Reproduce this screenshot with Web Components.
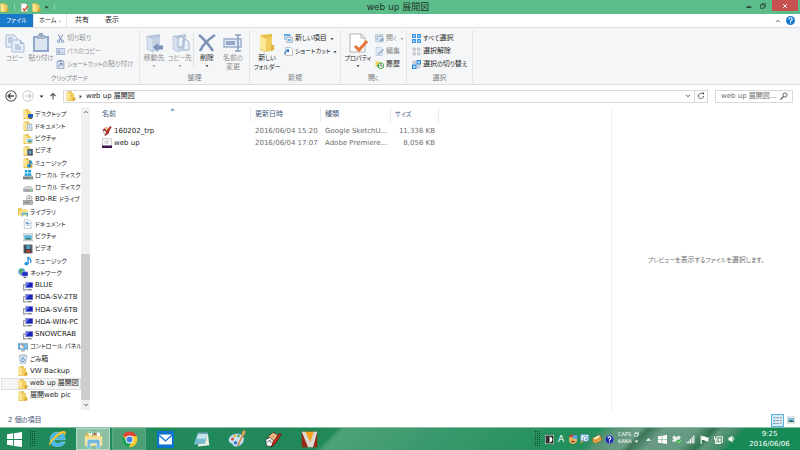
<!DOCTYPE html>
<html>
<head>
<meta charset="utf-8">
<title>web up 展開図</title>
<style>
html,body{height:100%;margin:0}
body{font:7px/9px "DejaVu Sans","Noto Sans CJK JP",sans-serif;font-feature-settings:"palt";color:#222;background:#fff;overflow:hidden}
</style>
</head>
<body>
<explorer-window></explorer-window>
<script>
const folder = '<path d="M1 1l8-1v16H1z" fill="#e3b93f"/><path d="M1 1l6 2v13l-6-2z" fill="#fbe594"/><path d="M8 3h5v8l-2 4-4 1V3z" fill="#f2cf5e"/><path d="M11 10h4v5l-5 1z" fill="#d9a92f"/>';
const docs = '<path d="M2 1h8l3 3v11H2z" fill="#fff" stroke="#a7b0ba"/>';
const pc = '<path d="M1 5v9h5M1 6h3" fill="none" stroke="#999" stroke-width="2"/><path d="M4 2h12v9H4z" fill="#1a22b8" stroke="#c6cbe0"/><path d="M5 3h5l-4 6H5z" fill="#5e75e8"/><path d="M7 13h7v2H7z" fill="#777"/>';
const bigFolderBlue = '<path d="M3 3l13-2v16l-8 2-5-3z" fill="#b7c6dc"/><path d="M3 3l6 3v13l-6-3z" fill="#d7e1ef" stroke="#a9bad3" stroke-width=".6"/><path d="M9 4h7v11l-4 3H9z" fill="#c5d2e4"/>';
const win = c => `<path d="M0 2.3l6.6-1v6.2H0zM7.5 1.2L16 0v7.5H7.5zM0 8.4h6.6v6.3L0 13.7zM7.5 8.4H16V16l-8.5-1.2z" fill="${c}"/>`;
const ICONS = {
  folder,
  desktop: folder+'<path d="M8 8h8v6H8z" fill="#1d5fc0"/><path d="M10 14h4v2h-4z" fill="#555"/>',
  fdoc: folder+'<path d="M7 5h7v10H7z" fill="#e9f2fb" stroke="#7d9ec4"/><path d="M9 8h3M9 11h3" stroke="#4b7db8"/>',
  fpic: folder+'<path d="M6 7h10v7H6z" fill="#8fcbe8" stroke="#fff"/><path d="M7 13l4-3 4 3z" fill="#3b8a53"/>',
  fvid: folder+'<path d="M7 5h9v10H7z" fill="#31506b"/><path d="M8 6v9M15 6v9" stroke="#ddd" stroke-dasharray="1 1"/><path d="M10 7h3v6h-3z" fill="#7fb1d2"/>',
  fmus: folder+'<path d="M11 4v8M11 4q4 2 3 6" stroke="#1682d4" stroke-width="2" fill="none"/><ellipse cx="9.500" cy="12.500" rx="3" ry="2.500" fill="#1682d4"/>',
  diskw: '<path d="M0 10l3-3h10l3 3v4H0z" fill="#b9bdc1"/><path d="M0 11h16v4H0z" fill="#7d8388"/><circle cx="13" cy="13" r="1" fill="#7f7"/><path d="M3 0h4v4H3zM8 0h5v4H8zM3 5h4v4H3zM8 5h5v4H8z" fill="#19a6e0"/>',
  disk: '<path d="M1 9l3-3h9l3 3v4H1z" fill="#d4d7da" stroke="#969ca0"/><path d="M1 10h15v4H1z" fill="#9aa0a5"/><circle cx="13" cy="12" r="1.200" fill="#5f5"/>',
  bd: '<circle cx="10" cy="5" r="4.500" fill="#eee" stroke="#888"/><circle cx="10" cy="5" r="1.500" fill="#888"/><path d="M0 9h15v6H0z" fill="#b8bcc0" stroke="#777"/><path d="M2 12h9" stroke="#555"/>',
  library: '<path d="M0 2h6l1 2h8v9H0z" fill="#e8c14c"/><path d="M2 5h13v9H2z" fill="#fae08a"/><path d="M6 9h10v6h-2v-3H8v3H6z" fill="#5ab0dc"/>',
  ldoc: docs+'<path d="M5 5h3v3H5zM6 10h5M9 7h3" stroke="#4a85be" fill="#88b6e0"/>',
  lpic: '<path d="M0 3h16v11H0z" fill="#f8fafb" stroke="#8e999f"/><path d="M2 5h12v7H2z" fill="#66b8dc"/><path d="M2 12l5-3 7 2v1z" fill="#2d7551"/>',
  lvid: '<path d="M1 1h14v14H1z" fill="#27333d"/><path d="M5 2h7v6H5z" fill="#4b9ac3"/><path d="M5 9h7v5H5z" fill="#a7443d"/><path d="M3 1v14M13.500 1v14" stroke="#ddd" stroke-dasharray="1.500 1.500"/>',
  lmus: '<path d="M8 1v11M8 2q6 3 4 9" stroke="#2089d8" stroke-width="2.200" fill="none"/><ellipse cx="5.500" cy="12.500" rx="3.500" ry="2.800" fill="#2a96e0"/>',
  net: '<circle cx="6" cy="6" r="5.500" fill="#4fa6e0"/><path d="M2 3l4-2 2 4-4 5z" fill="#54ad3c"/><path d="M6 6h10v7H6z" fill="#1a2fc0" stroke="#cbd"/><path d="M9 14h4v2H9z" fill="#667"/>',
  pc,
  panel: '<path d="M0 2h16v10H0z" fill="#5fa9dc" stroke="#9fb9cc"/><circle cx="6" cy="7" r="3" fill="#fff"/><path d="M6 7V4a3 3 0 0 1 3 3z" fill="#e2712d"/><path d="M11 5h3M11 8h3" stroke="#fff"/><path d="M5 13h6v2H5z" fill="#89a"/>',
  bin: '<path d="M2 3h12l-2 13H4z" fill="#dfe8ee" stroke="#9ab" /><path d="M2 3l3-2h7l2 2z" fill="#f4f7f9" stroke="#9ab"/><path d="M8 6l3 4-3 3-3-3z" fill="none" stroke="#3583d1" stroke-width="1.500"/>',
  qdoc: docs+'<path d="M5 10l3 3 6-8" stroke="#e04a1c" stroke-width="2.500" fill="none"/>',
  copy: '<g stroke="#a9bbd3" fill="#e8eef7"><path d="M1 2h8l3 3v9H1z"/><path d="M7 7h8l4 4v8H7z"/></g><path d="M3 5h5M3 7h4M3 9h3M10 12h4M10 14h6M10 16h6" stroke="#8fa9cb"/><path d="M15 7v4h4z" fill="#a5bad6"/>',
  paste: '<path d="M2 3h16v16H2z" fill="#8fa7ca"/><path d="M4 5h12v12H4z" fill="#dbe5f2"/><path d="M6 2h8v4H6z" fill="#a6b5ca"/><path d="M8 0h4v3H8z" fill="#97a8c1"/>',
  moveto: bigFolderBlue+'<path d="M9 14l5-4v2.500h5v4h-5V19z" fill="#7c96bb"/>',
  copyto: bigFolderBlue+'<path d="M8 4h4l2 2v8H8zM13 7h4l2 2v8h-6z" fill="#eaf0f8" stroke="#9db1ce"/>',
  del: '<path d="M2 2c5 4 10 10 14 16M18 2C12 6 6 11 3 18" stroke="#7d92b5" stroke-width="2.600" fill="none"/>',
  rename: '<path d="M1 6h17v8H1z" fill="#e3eaf4" stroke="#9aaecb" stroke-width="1.400"/><path d="M3 8h9v4H3z" fill="#91a8ca"/><path d="M12 2h6M15 2v16M12 18h6" stroke="#8ba0c0" stroke-width="1.600"/>',
  newfolder: '<path d="M3 2l12-1v16l-7 2-5-2z" fill="#e7bd45"/><path d="M3 2l6 4v13l-6-3z" fill="#fbe795"/><path d="M9 4h6v13l-6 2z" fill="#f0cd5d"/><path d="M14 12h3v5l-3 1z" fill="#e0b136"/>',
  props: '<path d="M2 1h11l4 4v14H2z" fill="#fff" stroke="#b0b4b8"/><path d="M13 1v4h4" fill="none" stroke="#b0b4b8"/><path d="M7 13l4 4 8-9" stroke="#e8743a" stroke-width="3" fill="none"/>',
  cut: '<path d="M4 1l6 10M12 1L6 11" stroke="#8297b5" stroke-width="1.800"/><circle cx="4.500" cy="13" r="2.200" fill="none" stroke="#6d8fc0" stroke-width="1.600"/><circle cx="11.500" cy="13" r="2.200" fill="none" stroke="#6d8fc0" stroke-width="1.600"/>',
  path: '<path d="M0 3h16v10H0z" fill="#dae4f1" stroke="#8ba0c0" stroke-width="1.500"/><path d="M3 6l2 5 2-5M9 10h1M12 10h1" fill="none" stroke="#6780a5" stroke-width="1.300"/>',
  shortcut: '<path d="M2 2h12v13H2z" fill="#dfe8f3" stroke="#8ba0c0" stroke-width="1.500"/><path d="M5 0h6v3H5z" fill="#8ba0c0"/><path d="M5 12q0-4 5-5M7 6h4v4" fill="none" stroke="#5d78a3" stroke-width="1.500"/>',
  newitem: '<path d="M0 1h11v8H0z" fill="#cfe7f8" stroke="#3f8fd0"/><path d="M0 1h11v2H0z" fill="#3f8fd0"/><path d="M5 6h10v9H5z" fill="#fff" stroke="#77838f"/><path d="M7 9h6v4H7z" fill="#6bb5e2"/>',
  newshort: '<path d="M3 1h9l3 3v11H3z" fill="#fff" stroke="#8c969f"/><path d="M1 13q0-5 6-6M4 5h4v4" fill="none" stroke="#1e77d0" stroke-width="2"/>',
  open: '<path d="M1 1h13v13H1z" fill="#dfe7f1" stroke="#9bb0cc"/><path d="M3 4h2M3 7h2M3 10h2M7 4h5" stroke="#6e8bb4" stroke-width="1.500"/><path d="M7 12l5-5h3v6h-5z" fill="#8ea7c8"/>',
  edit: '<path d="M2 1h8l3 3v11H2z" fill="#e6edf6" stroke="#a6b7cf"/><path d="M5 14l1-4 8-7 2 2-8 8z" fill="#9bb2d0"/>',
  history: '<path d="M1 2h5l1 2h6v7H1z" fill="#efd15e"/><circle cx="10.500" cy="10.500" r="5" fill="#e9f5e7" stroke="#2f9a42" stroke-width="1.500"/><path d="M10.500 7v4h3" stroke="#333" fill="none"/><path d="M3 9h5l-2 5z" fill="#2f9a42"/>',
  all: '<path d="M0 0h7v7H0zM9 0h7v7H9zM0 9h7v7H0zM9 9h7v7H9z" fill="#3b94e0"/><path d="M2 2h3v3H2zM11 2h3v3h-3zM2 11h3v3H2zM11 11h3v3h-3z" fill="#b9dcf7"/>',
  none: '<path d="M2 2h4v4H2zM10 2h4v4h-4zM2 10h4v4H2zM10 10h4v4h-4z" fill="#fff" stroke="#9da2a7" stroke-width="1.300"/>',
  invert: '<path d="M2 2h4v4H2zM10 10h4v4h-4z" fill="#fff" stroke="#9da2a7" stroke-width="1.300"/><path d="M9 1h6v6H9zM1 9h6v6H1z" fill="#c6e3fa" stroke="#2386dc" stroke-width="2"/>',
  min: '<path d="M1 9h13v4H1z" fill="#20392c"/>',
  restore: '<path d="M5 5V2h10v8h-3" fill="none" stroke="#20392c" stroke-width="2"/><path d="M1 5h10v9H1z" fill="none" stroke="#20392c" stroke-width="2"/>',
  kana: '<path d="M5 5V2h10v8h-3M1 5h10v9H1z" fill="none" stroke="#fff" stroke-width="2"/>',
  close: '<path d="M3 3l10 10M13 3L3 13" stroke="#fff" stroke-width="2.400"/>',
  up: '<path d="M3 11l5-5 5 5" fill="none" stroke="#555" stroke-width="2.500"/>',
  down: '<path d="M3 5l5 5 5-5" fill="none" stroke="#444" stroke-width="2.500"/>',
  help: '<circle cx="8" cy="8" r="8" fill="#1878d0"/><path d="M5 6q0-3 3-3t3 3q0 1-3 3v1M8 11.500v2" fill="none" stroke="#fff" stroke-width="2"/>',
  back: '<circle cx="8" cy="8" r="7" fill="#fff" stroke="#555" stroke-width="1.400"/><path d="M12 8H4M7.500 4.500L4 8l3.500 3.500" fill="none" stroke="#444" stroke-width="1.800"/>',
  fwd: '<circle cx="8" cy="8" r="7" fill="#fff" stroke="#c9c9c9" stroke-width="1.300"/><path d="M4 8h8M8.500 4.500L12 8l-3.500 3.500" fill="none" stroke="#c9c9c9" stroke-width="1.600"/>',
  caret: '<path d="M2 5h12l-6 7z" fill="currentColor"/>',
  right: '<path d="M5 2l7 6-7 6z" fill="#444"/>',
  uparrow: '<path d="M8 15V3M3 8l5-5 5 5" fill="none" stroke="#555" stroke-width="2.200"/>',
  refresh: '<path d="M13 8a5.200 5.200 0 1 1-2-4" fill="none" stroke="#555" stroke-width="1.800"/><path d="M9 1h5v5z" fill="#555"/>',
  search: '<circle cx="10" cy="6" r="4.200" fill="none" stroke="#555" stroke-width="1.800"/><path d="M7 9l-6 6" stroke="#555" stroke-width="2.200"/>',
  sketch: '<path d="M1 6l5-4 6 3-1 7-6 2z" fill="#b33425"/><path d="M1 7l5 1 3 5-4 2z" fill="#fff" stroke="#555" stroke-width=".7"/><path d="M4 3l4-2 3 3-4 3z" fill="#eac9a0"/><path d="M13 0l2 2-7 11-3 3 1-5z" fill="#d93c2c" stroke="#5e1712" stroke-width=".6"/>',
  prem: '<path d="M1 1h14v14H1z" fill="#fff" stroke="#aaa"/><path d="M4 5h8M4 8h6" stroke="#999"/><path d="M0 12h16v4H0z" fill="#3a1148"/>',
  sort: '<path d="M1 12h14L8 4z" fill="currentColor"/>',
  details: '<path d="M1 3h3M1 8h3M1 13h3" stroke="#3f7cb8" stroke-width="2"/><path d="M6 3h4M6 8h4M6 13h4M12 3h3M12 8h3M12 13h3" stroke="#777" stroke-width="1.500"/>',
  thumbs: '<path d="M0 2h16v12H0z" fill="#fff" stroke="#8a949b"/><path d="M2 4h12v8H2z" fill="#7cbbe2"/><path d="M2 12l6-4 6 3v1z" fill="#35694e"/>',
  win: win('#fff'),
  ie: '<path d="M23 13H8q0 5 5 5 3 0 4-2h6q-3 6-10 6Q3 22 3 12.500T13 3q10 0 10 10zM8 10h9q0-3-4.300-3T8 10z" fill="#45b5ee" stroke="#b8e8ff" stroke-width=".6" fill-rule="evenodd"/><path d="M3 22Q-2 19 8 9T23 2q2 2-1 6 1-4-3-3Q13 7 6 15t-3 7z" fill="#f5c435"/>',
  explorer: '<path d="M2 4h8l1 3h11v12H2z" fill="#e9bd50"/><path d="M6 2h4v5H6zM16 3h4v5h-4z" fill="#fff"/><path d="M7 2h2v2H7z" fill="#34a05b"/><path d="M12 4h4v2h-4z" fill="#d55536"/><path d="M1 8h22v12H1z" fill="#fbe296"/><path d="M4 14q0-2 2-2h12q2 0 2 2v9h-4v-6H8v6H4z" fill="#72b9e2" stroke="#d5effb" stroke-width=".7"/>',
  chrome: '<circle cx="12" cy="12" r="11" fill="#fbcb2e"/><path d="M12 12L2.500 6.500A11 11 0 0 1 22 7H12z" fill="#df4436"/><path d="M2.500 6.500A11 11 0 0 0 11 23l5-8.500-8-.5z" fill="#1fa15d"/><circle cx="12" cy="12" r="5.500" fill="#fff"/><circle cx="12" cy="12" r="4.200" fill="#447fe8"/>',
  mail: '<path d="M0 0h24v24H0z" fill="#0c72cf"/><path d="M3 5h18v14H3z" fill="#fff"/><path d="M3 6l9 8 9-8" fill="none" stroke="#0c72cf" stroke-width="2"/>',
  notepad: '<path d="M7 3h14l2 17-16 2z" fill="#f0eee2"/><path d="M7 2h14l-4 16L1 19z" fill="#76bdd0"/><path d="M8 4h12l-2 7H5z" fill="#c3e6ec"/><path d="M7 3h14" stroke="#5d7c87" stroke-width="2" stroke-dasharray="1.500 1"/>',
  paint: '<path d="M12 5c7 0 10 4 9 9s-6 8-11 8c-4 0-3-3-5-4s-4-1-4-5 5-8 11-8z" fill="#c8e0f1" stroke="#6c9ec4" stroke-width=".7"/><circle cx="6" cy="12" r="2" fill="#d54b37"/><circle cx="9" cy="8" r="1.800" fill="#eab126"/><circle cx="14" cy="8" r="1.800" fill="#4fae46"/><circle cx="10" cy="17" r="2.200" fill="#2b76cc"/><path d="M21 4l-8 17" stroke="#d88a35" stroke-width="2.200"/><path d="M18 6l2-6 4 2-3 6z" fill="#d9a05d"/>',
  sketchup: '<path d="M4 8l7-6 7 3-3 12-8 3z" fill="#e8b27c" stroke="#322"/><path d="M1 12l6-3 6 6-4 7-7-1z" fill="#fff" stroke="#222"/><path d="M3 16l4-3 2 4" fill="none" stroke="#222"/><path d="M21 3l2 2-9 13-5 5 2-7z" fill="#da2c20" stroke="#4a0d0a"/>',
  v: '<path d="M1 1h22v22H1z" fill="#962a12"/><path d="M3 1h18l-5 14H8z" fill="#f4a51c"/><path d="M1 1h5l7 15 5-15h5l-6 22h-7z" fill="#ddd9d5"/>',
  ime: '<path d="M0 0h16v16H0z" fill="#eee"/><path d="M1 1h14v14H1z" fill="#222"/><circle cx="8" cy="8" r="5" fill="#fff"/><path d="M8 3a5 5 0 0 0 0 10z" fill="#222"/>',
  face: '<circle cx="8" cy="9" r="6.500" fill="#edb461"/><path d="M1 5h14l-3-4H4z" fill="#c94337"/><path d="M8 2h7v6H8z" fill="#58a9e7"/><path d="M5 12h6" stroke="#7b321d" stroke-width="2"/>',
  dict: '<path d="M1 1h13v10H1z" fill="#d4ecfb" stroke="#4792c8"/><circle cx="9" cy="8" r="4" fill="#fff" stroke="#44729b"/><path d="M5 11l-4 4" stroke="#d7a039" stroke-width="2"/><path d="M8 8h3" stroke="#267ac0" stroke-width="2"/>',
  tool: '<path d="M1 7l9-5 5 3v5l-9 5-5-3z" fill="#eeb04d" stroke="#9a5e21"/><path d="M3 8l9-5" stroke="#fff" stroke-width="2"/><path d="M1 8l5 3 9-5" fill="none" stroke="#bd6730"/>',
  qmark: '<circle cx="8" cy="8" r="7.500" fill="#1525a8" stroke="#8fa5e8"/><path d="M5.500 6q0-3 2.500-3t2.500 3q0 1-2.500 3v1M8 11.500v2" fill="none" stroke="#fff" stroke-width="2"/>',
  trayup: '<path d="M2 11h12L8 5z" fill="#fff"/>',
  dropbox: '<path d="M4 1l4 3 4-3 4 3-3 3 3 3-4 3-4-3-4 3-4-3 3-3-3-3z" fill="#e7eeea"/><circle cx="12" cy="12" r="4" fill="#39b54a"/><path d="M10 12l2 2 3-4" stroke="#fff" fill="none"/>',
  signal: '<path d="M1 12h2v3H1zM4 10h2v5H4zM7 7h2v8H7zM10 4h2v11h-2zM13 1h2v14h-2z" fill="#fff"/>',
  flag: '<path d="M2 1v15" stroke="#fff" stroke-width="2"/><path d="M3 2h6l1 2h5v7H9L8 9H3z" fill="#fff"/>',
  lan: '<path d="M5 3h10v10H5z" fill="none" stroke="#fff" stroke-width="1.600"/><path d="M1 2v5h4M3 7v8h9" stroke="#fff" stroke-width="1.800" fill="none"/><path d="M8 6h4v5H8z" fill="#fff"/>',
  sound: '<path d="M1 5h3l5-4v14l-5-4H1z" fill="#fff"/><path d="M11 5q2 3 0 6" stroke="#fff" fill="none" stroke-width="1.500"/>'
};
const BASE = `<style>
:host,*{box-sizing:border-box}
button,input{font:inherit;font-feature-settings:inherit;color:inherit;background:none;border:0;padding:0;margin:0}
a{color:inherit;text-decoration:none}
small{font-size:6px;line-height:1px}
</style>`;
// Kana are set one size below the kanji and Latin text around them.
function setKana(root){
  const walker = document.createTreeWalker(root, NodeFilter.SHOW_TEXT), found = [];
  while (walker.nextNode()) found.push(walker.currentNode);
  for (const n of found) {
    if (n.parentNode.nodeName === 'STYLE' || !/[\u3001-\u30ff]/.test(n.data)) continue;
    const f = document.createDocumentFragment();
    for (const part of n.data.split(/([\u3001-\u30ff]+(?: [\u3001-\u30ff]+)*)/)) {
      if (!part) continue;
      if (/[\u3001-\u30ff]/.test(part)) {
        const s = document.createElement('small');
        s.textContent = part;
        f.append(s);
      } else f.append(part);
    }
    n.replaceWith(f);
  }
}
function define(name, html){
  customElements.define(name, class extends HTMLElement{
    constructor(){ super(); this.attachShadow({mode:'open'}); }
    connectedCallback(){
      if (this.shadowRoot.childNodes.length) return;
      const t = document.createElement('template');
      t.innerHTML = BASE + (typeof html === 'function' ? html(this) : html);
      setKana(t.content);
      this.shadowRoot.append(t.content.cloneNode(true));
    }
  });
}
define('ui-icon', el => {
  const s = el.getAttribute('size') || 10, b = el.getAttribute('box') || 16;
  return `<style>:host{display:block;flex:none;width:${s}px;height:${s}px}svg{display:block;width:100%;height:100%}</style>
  <svg viewBox="0 0 ${b} ${b}" aria-hidden="true">${ICONS[el.getAttribute('name')]}</svg>`;
});

define('title-bar', `<style>
:host{display:grid;grid-template-columns:1fr auto 1fr;height:14px;background:#5cbd8b;color:#1d3328;flex:none}
.quick{display:flex;align-items:center;gap:3px}
.quick i{width:1px;height:6px;background:#8fd3b0;margin:0 2px}
.quick button{display:block}
h1{font-size:9px;line-height:14px;font-weight:400;margin:0;padding-right:4px}
.win{display:flex;justify-content:flex-end;padding-right:2px;align-items:flex-start}
.win button{width:14px;height:11px;display:grid;place-items:center}
.win .close{width:26px;background:#c75050;margin-left:2px}
</style>
<div class="quick"><ui-icon name="folder" size="9"></ui-icon><i></i><button aria-label="プロパティ"><ui-icon name="qdoc" size="9"></ui-icon></button><button aria-label="新しいフォルダー"><ui-icon name="folder" size="9"></ui-icon></button><button aria-label="カスタマイズ"><ui-icon name="caret" size="5"></ui-icon></button><i></i></div>
<h1><slot></slot></h1>
<div class="win"><button aria-label="最小化"><ui-icon name="min" size="6"></ui-icon></button><button aria-label="元に戻す"><ui-icon name="restore" size="6"></ui-icon></button><button class="close" aria-label="閉じる"><ui-icon name="close" size="6"></ui-icon></button></div>`);

define('ribbon-tabs', `<style>
:host{display:flex;height:13px;background:#fff;flex:none;padding-right:3px;align-items:stretch}
button{width:30px;text-align:center;line-height:13px}
.file{width:33px;background:#1979ca;color:#fff}
.on{width:34px;background:#fff;border:solid #e3e5e7;border-width:0 1px}
nav{display:flex;flex:1}
.r{width:13px;display:grid;place-items:center}
</style>
<nav><button class="file">ファイル</button><button class="on">ホーム .</button><button>共有</button><button>表示</button></nav>
<button class="r" aria-label="リボンの最小化"><ui-icon name="up" size="6"></ui-icon></button><button class="r" aria-label="ヘルプ"><ui-icon name="help" size="9"></ui-icon></button>`);

define('ribbon-button', el => `<style>
:host{display:block;flex:none;width:${el.getAttribute('w')||26}px;color:${el.hasAttribute('off')?'#8e8e8e':'#262626'}}
button{display:flex;flex-direction:column;align-items:center;width:100%;gap:1px;white-space:nowrap;line-height:9px}
</style><button><ui-icon name="${el.getAttribute('icon')}" size="20" box="20"></ui-icon><span><slot></slot></span>${el.hasAttribute('menu')?'<ui-icon name="caret" size="4"></ui-icon>':''}</button>`);

define('ribbon-item', el => `<style>
:host{display:block;color:${el.hasAttribute('off')?'#8e8e8e':'#262626'}}
button{display:flex;align-items:center;gap:2px;height:9px;line-height:9px;white-space:nowrap}
span{margin-right:1px}
</style><button><ui-icon name="${el.getAttribute('icon')}" size="9"></ui-icon><span><slot></slot></span>${el.hasAttribute('menu')?'<ui-icon name="caret" size="4"></ui-icon>':''}</button>`);

define('ribbon-group', el => `<style>
:host{display:flex;flex-direction:column;flex:0 0 ${el.getAttribute('w')}px;border-right:1px solid #e4e6e8;margin:2px 0 1px}
.body{display:flex;flex:1;padding:3px 0 0 ${el.getAttribute('pad')||2}px}
.label{text-align:center;color:#7c7f84;line-height:9px}
::slotted(ribbon-stack){margin-left:2px}
</style><div class="body"><slot></slot></div><div class="label">${el.getAttribute('label')}</div>`);
define('ribbon-stack', `<style>:host{display:flex;flex-direction:column;gap:4px;padding-top:1px}</style><slot></slot>`);
define('ribbon-rule', `<style>:host{display:block;width:1px;background:#dfe2e5;height:34px}</style>`);

define('ribbon-bar', `<style>:host{display:flex;height:58px;flex:none;background:#f5f6f7;border:solid #dcdee0;border-width:1px 0}</style>
<ribbon-group w="140" label="クリップボード"><ribbon-button icon="copy" off>コピー</ribbon-button><ribbon-button icon="paste" off>貼り付け</ribbon-button>
<ribbon-stack><ribbon-item icon="cut" off>切り取り</ribbon-item><ribbon-item icon="path" off>パスのコピー</ribbon-item><ribbon-item icon="shortcut" off>ショートカットの貼り付け</ribbon-item></ribbon-stack></ribbon-group>
<ribbon-group w="110" pad="1" label="整理"><ribbon-button icon="moveto" off menu>移動先</ribbon-button><ribbon-button icon="copyto" off menu>コピー先</ribbon-button><ribbon-rule></ribbon-rule><ribbon-button icon="del" menu>削除</ribbon-button><ribbon-button icon="rename" off>名前の<br>変更</ribbon-button></ribbon-group>
<ribbon-group w="91" label="新規"><ribbon-button w="30" icon="newfolder">新しい<br>フォルダー</ribbon-button><ribbon-stack><ribbon-item icon="newitem" menu>新しい項目</ribbon-item><ribbon-item icon="newshort" menu>ショートカット</ribbon-item></ribbon-stack></ribbon-group>
<ribbon-group w="66" label="開く"><ribbon-button w="30" icon="props" menu>プロパティ</ribbon-button><ribbon-stack><ribbon-item icon="open" off menu>開く</ribbon-item><ribbon-item icon="edit" off>編集</ribbon-item><ribbon-item icon="history">履歴</ribbon-item></ribbon-stack></ribbon-group>
<ribbon-group w="66" pad="3" label="選択"><ribbon-stack><ribbon-item icon="all">すべて選択</ribbon-item><ribbon-item icon="none">選択解除</ribbon-item><ribbon-item icon="invert">選択の切り替え</ribbon-item></ribbon-stack></ribbon-group>`);

define('address-bar', `<style>
:host{display:flex;align-items:center;height:22px;flex:none;padding:0 7px 0 5px}
button{display:grid;place-items:center}
.nav{display:flex;align-items:center;width:58px;gap:5px}
.box{display:flex;align-items:center;border:1px solid #d9d9d9;height:13px}
.path{flex:1;min-width:0}
.path a{flex:1;padding-left:3px;line-height:11px}
.path ui-icon{margin-left:2px}
.path button{width:13px;height:11px}
.path button ui-icon{margin:0}
.path button:last-child{border-left:1px solid #d9d9d9}
.search{width:78px;margin-left:7px;padding:0 4px 0 5px}
input{flex:1;min-width:0;outline:0;color:#6d6d6d;height:9px;line-height:9px}
</style>
<div class="nav"><button aria-label="戻る"><ui-icon name="back" size="12"></ui-icon></button><button aria-label="進む"><ui-icon name="fwd" size="12"></ui-icon></button><button aria-label="履歴"><ui-icon name="caret" size="5"></ui-icon></button><button aria-label="上へ"><ui-icon name="uparrow" size="8"></ui-icon></button></div>
<div class="box path"><ui-icon name="folder" size="10"></ui-icon><ui-icon name="right" size="5"></ui-icon><a href="#">web up 展開図</a><button aria-label="以前の場所"><ui-icon name="down" size="6"></ui-icon></button><button aria-label="更新"><ui-icon name="refresh" size="8"></ui-icon></button></div>
<div class="box search"><input type="text" aria-label="検索" value="web up 展開図..."><button aria-label="検索する"><ui-icon name="search" size="8"></ui-icon></button></div>`);

const TREE = [['desktop','デスクトップ',1],['fdoc','ドキュメント',1],['fpic','ピクチャ',1],['fvid','ビデオ',1],['fmus','ミュージック',1],['diskw','ローカル ディスク',1],['disk','ローカル ディスク',1],['bd','BD-RE ドライブ',1],['library','ライブラリ'],['ldoc','ドキュメント',1],['lpic','ピクチャ',1],['lvid','ビデオ',1],['lmus','ミュージック',1],['net','ネットワーク'],['pc','BLUE',1],['pc','HDA-SV-2TB',1],['pc','HDA-SV-6TB',1],['pc','HDA-WIN-PC',1],['pc','SNOWCRAB',1],['panel','コントロール パネル'],['bin','ごみ箱'],['folder','VW Backup'],['folder','web up 展開図',0,1],['folder','展開web pic']];
define('nav-tree', `<style>
:host{display:flex;width:90px;flex:none;color:#1c1c1c}
nav{flex:1;min-width:0;display:grid;grid-auto-rows:1fr;padding:1px 0 11px 1px}
a{display:flex;align-items:center;gap:2px;padding-left:16px;white-space:nowrap;border:1px solid transparent;min-height:0;min-width:0;line-height:9px}
a.sub{padding-left:21px}
a.on{background:#f5f5f5;border-color:#dedede}
.bar{width:9px;background:#f0f0f0;display:flex;flex-direction:column;margin-bottom:3px;flex:none}
.bar button{height:10px;display:grid;place-items:center;width:100%}
.track{flex:1;display:grid;grid-template-rows:136fr 144fr}
.track i{background:#cdcdcd;grid-row:2}
</style><nav aria-label="フォルダー">${TREE.map(([i,t,s,o])=>`<a href="#" class="${s?'sub':''} ${o?'on':''}"><ui-icon name="${i}" size="10"></ui-icon><span>${t}</span></a>`).join('')}</nav>
<div class="bar"><button aria-label="上へスクロール"><ui-icon name="up" size="6"></ui-icon></button><div class="track"><i></i></div><button aria-label="下へスクロール"><ui-icon name="down" size="6"></ui-icon></button></div>`);

define('file-list', `<style>
:host{display:block;flex:1;min-width:0;padding:0 0 0 8px}
table{border-collapse:separate;border-spacing:0;table-layout:fixed;width:341px}
th{font-weight:400;text-align:left;color:#43587a;height:15px;border-right:1px solid #e3ebf4;padding:0 0 0 4px;position:relative}
th button{display:block;text-align:left;line-height:9px}
th ui-icon{position:absolute;left:72px;top:0;color:#5a9cc8}
td{height:12px;padding:0 0 0 4px;color:#6d6d6d;white-space:nowrap;line-height:9px}
td:first-child{color:#1c1c1c}
td:last-child{text-align:right;padding-right:4px}
td div{display:flex;align-items:center;gap:2px}
thead::after{content:"";display:block;height:3px}
</style><table><colgroup><col style="width:153px"><col style="width:70px"><col style="width:70px"><col style="width:48px"></colgroup>
<thead><tr><th><button>名前</button><ui-icon name="sort" size="5"></ui-icon></th><th><button>更新日時</button></th><th><button>種類</button></th><th><button>サイズ</button></th></tr></thead>
<tbody><tr><td><div><ui-icon name="sketch" size="10"></ui-icon>160202_trp</div></td><td>2016/06/04 15:20</td><td>Google SketchU...</td><td>11,336 KB</td></tr>
<tr><td><div><ui-icon name="prem" size="10"></ui-icon>web up</div></td><td>2016/06/04 17:07</td><td>Adobe Premiere...</td><td>8,056 KB</td></tr></tbody></table>`);

define('preview-pane', `<style>:host{display:grid;place-items:center;flex:0 0 189px;border-left:1px solid #f0f0f0;color:#6d6d6d}</style><p style="margin:0"><slot></slot></p>`);

define('status-bar', `<style>
:host{display:flex;align-items:center;height:14px;flex:none;padding:0 3px 0 8px;color:#3b4f70}
span{flex:1}
button{width:13px;height:13px;display:grid;place-items:center}
.on{background:#d5ecf8;border:1px solid #58b2e0}
</style><span>2 個の項目</span><button class="on" aria-label="詳細"><ui-icon name="details" size="9"></ui-icon></button><button aria-label="大アイコン"><ui-icon name="thumbs" size="8"></ui-icon></button>`);

define('task-bar', `<style>
:host{display:flex;align-items:center;height:23px;flex:none;color:#fff;border-top:1px solid #8abfa4;
background:linear-gradient(135deg,#20895a 0%,#21885a 41%,#4ea279 42%,#3a986d 54%,#22905d 70%,#23905d 73%,#5c9479 75%,#6a9c85 78%,#3c7559 79%,#6a9b85 81%,#669a81 85%,#2f7351 87%,#5f987c 88%,#3f8a66 90%,#178955 91%,#168b57 100%)}
button{display:grid;place-items:center;height:22px}
.start{width:29px}
.grip{width:6px;height:16px;background:conic-gradient(#0f4a2f 25%,transparent 0) 0 0/2px 2px}
.apps{display:flex;gap:2px;flex:1;padding-left:5px}
.apps button{width:34px}
.apps .on{background:#8cc0a3;border:1px solid #b9dac8}
.apps .run{background:#4b9f76;border:1px solid #5caa84}
.ime,.tray{display:flex;align-items:center}
.ime button{width:12px}
.ime{padding-left:3px;width:101px}
.ime .a{font-size:9px}
.caps{font-size:5px;line-height:7px;margin-left:3px;display:grid;grid-template-columns:auto auto;align-items:center;column-gap:2px;padding-bottom:3px}
.tray button{width:14px}
time{width:61px;text-align:center;line-height:10px}
</style>
<button class="start" aria-label="スタート"><ui-icon name="win" size="15"></ui-icon></button><div class="grip"></div>
<div class="apps"><button aria-label="Internet Explorer"><ui-icon name="ie" size="18" box="24"></ui-icon></button><button class="on" aria-label="エクスプローラー"><ui-icon name="explorer" size="19" box="24"></ui-icon></button><button class="run" aria-label="Chrome"><ui-icon name="chrome" size="17" box="24"></ui-icon></button><button aria-label="メール"><ui-icon name="mail" size="17" box="24"></ui-icon></button><button aria-label="メモ帳"><ui-icon name="notepad" size="17" box="24"></ui-icon></button><button aria-label="ペイント"><ui-icon name="paint" size="18" box="24"></ui-icon></button><button aria-label="SketchUp"><ui-icon name="sketchup" size="17" box="24"></ui-icon></button><button aria-label="Vectorworks"><ui-icon name="v" size="17" box="24"></ui-icon></button></div>
<div class="grip"></div>
<div class="ime"><button aria-label="IME"><ui-icon name="ime" size="9"></ui-icon></button><button class="a">A</button><button aria-label="パッド"><ui-icon name="face" size="10"></ui-icon></button><button aria-label="辞書"><ui-icon name="dict" size="10"></ui-icon></button><button aria-label="ツール"><ui-icon name="tool" size="10"></ui-icon></button><button aria-label="ヘルプ"><ui-icon name="qmark" size="9"></ui-icon></button><div class="caps"><span>CAPS</span><ui-icon name="kana" size="5"></ui-icon><span>KANA</span><ui-icon name="caret" size="5"></ui-icon></div></div>
<div class="tray"><button aria-label="隠れているアイコン"><ui-icon name="trayup" size="7"></ui-icon></button><button aria-label="Windows"><ui-icon name="win" size="9"></ui-icon></button><button aria-label="Dropbox"><ui-icon name="dropbox" size="9"></ui-icon></button><button aria-label="電波"><ui-icon name="signal" size="9"></ui-icon></button><button aria-label="通知"><ui-icon name="flag" size="9"></ui-icon></button><button aria-label="ネットワーク"><ui-icon name="lan" size="9"></ui-icon></button><button aria-label="音量"><ui-icon name="sound" size="8"></ui-icon></button></div>
<time>9:25<br>2016/06/06</time>`);

define('explorer-window', `<style>
:host{display:flex;flex-direction:column;height:100vh}
main{display:flex;flex:1;min-height:0}
</style>
<title-bar>web up 展開図</title-bar><ribbon-tabs></ribbon-tabs><ribbon-bar></ribbon-bar><address-bar></address-bar>
<main><nav-tree></nav-tree><file-list></file-list><preview-pane>プレビューを表示するファイルを選択します。</preview-pane></main>
<status-bar></status-bar><task-bar></task-bar>`);
</script>
</body>
</html>
